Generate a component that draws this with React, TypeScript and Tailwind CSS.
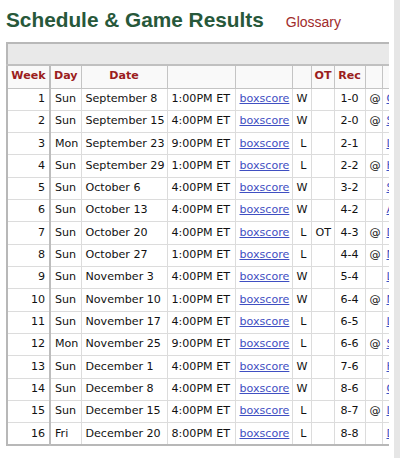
import React from "react";

interface Game {
  week: number;
  day: string;
  date: string;
  time: string;
  result: string;
  ot?: string;
  rec: string;
  away?: boolean;
  opp: string;
}

const games: Game[] = [
  { week: 1, day: "Sun", date: "September 8", time: "1:00PM ET", result: "W", rec: "1-0", away: true, opp: "Chicago Bears" },
  { week: 2, day: "Sun", date: "September 15", time: "4:00PM ET", result: "W", rec: "2-0", away: true, opp: "Seattle Seahawks" },
  { week: 3, day: "Mon", date: "September 23", time: "9:00PM ET", result: "L", rec: "2-1", opp: "Los Angeles Rams" },
  { week: 4, day: "Sun", date: "September 29", time: "1:00PM ET", result: "L", rec: "2-2", away: true, opp: "Houston Texans" },
  { week: 5, day: "Sun", date: "October 6", time: "4:00PM ET", result: "W", rec: "3-2", opp: "San Francisco 49ers" },
  { week: 6, day: "Sun", date: "October 13", time: "4:00PM ET", result: "W", rec: "4-2", opp: "Arizona Cardinals" },
  { week: 7, day: "Sun", date: "October 20", time: "4:00PM ET", result: "L", ot: "OT", rec: "4-3", away: true, opp: "Detroit Lions" },
  { week: 8, day: "Sun", date: "October 27", time: "1:00PM ET", result: "L", rec: "4-4", away: true, opp: "New York Giants" },
  { week: 9, day: "Sun", date: "November 3", time: "4:00PM ET", result: "W", rec: "5-4", opp: "Las Vegas Raiders" },
  { week: 10, day: "Sun", date: "November 10", time: "1:00PM ET", result: "W", rec: "6-4", away: true, opp: "New Orleans Saints" },
  { week: 11, day: "Sun", date: "November 17", time: "4:00PM ET", result: "L", rec: "6-5", opp: "Los Angeles Chargers" },
  { week: 12, day: "Mon", date: "November 25", time: "9:00PM ET", result: "L", rec: "6-6", away: true, opp: "Seattle Seahawks" },
  { week: 13, day: "Sun", date: "December 1", time: "4:00PM ET", result: "W", rec: "7-6", opp: "Houston Texans" },
  { week: 14, day: "Sun", date: "December 8", time: "4:00PM ET", result: "W", rec: "8-6", opp: "Chicago Bears" },
  { week: 15, day: "Sun", date: "December 15", time: "4:00PM ET", result: "L", rec: "8-7", away: true, opp: "Los Angeles Rams" },
  { week: 16, day: "Fri", date: "December 20", time: "8:00PM ET", result: "L", rec: "8-8", opp: "Denver Broncos" },
];

const td = "border border-[#dcdcdc] px-[4px] whitespace-nowrap overflow-hidden";
const th = "border border-[#c4c4c4] px-[3px] text-center font-bold text-[#9b1d20] whitespace-nowrap overflow-hidden";

export default function App() {
  return (
    <div className="w-[400px] h-[458px] flex overflow-hidden bg-white">
      <div className="flex-1 min-w-0 pl-[6px] pr-[5px]">
        <div className="flex items-baseline gap-[22px] pt-[7px] mb-[7px] leading-[26px] font-['Liberation_Sans',Arial,sans-serif]">
          <h1 className="text-[20.8px] font-bold text-[#27583a] whitespace-nowrap">Schedule &amp; Game Results</h1>
          <span className="text-[14px] text-[#a02b2b]">Glossary</span>
        </div>
        <div className="overflow-hidden">
          <table className="table-fixed border-collapse w-[500px] text-[11.1px] text-[#111] font-['DejaVu_Sans',Verdana,sans-serif] border-2 border-[#b8b8b8]">
            <colgroup>
              <col className="w-[43px]" />
              <col className="w-[31px]" />
              <col className="w-[86px]" />
              <col className="w-[68px]" />
              <col className="w-[57px]" />
              <col className="w-[19px]" />
              <col className="w-[23px]" />
              <col className="w-[31px]" />
              <col className="w-[17px]" />
              <col className="w-[125px]" />
            </colgroup>
            <thead>
              <tr className="h-[22px] bg-[#e9e9e9]">
                <th colSpan={10} className="border-b-2 border-[#c0c0c0]" />
              </tr>
              <tr className="h-[23px] bg-[#f9f9f9]">
                <th className={`${th} border-r-2 border-r-[#bdbdbd]`}>Week</th>
                <th className={th}>Day</th>
                <th className={th}>Date</th>
                <th className={th}></th>
                <th className={th}></th>
                <th className={th}></th>
                <th className={th}>OT</th>
                <th className={th}>Rec</th>
                <th className={th}></th>
                <th className={th}></th>
              </tr>
            </thead>
            <tbody>
              {games.map((g) => (
                <tr key={g.week} className="h-[22.33px]">
                  <td className={`${td} text-right border-r-2 border-r-[#bdbdbd]`}>{g.week}</td>
                  <td className={`${td} px-[3px]`}>{g.day}</td>
                  <td className={`${td} px-[3px]`}>{g.date}</td>
                  <td className={td}>{g.time}</td>
                  <td className={td}>
                    <a href="#" className="text-[#3f4fc2] underline">boxscore</a>
                  </td>
                  <td className={`${td} text-right px-[3px]`}>{g.result}</td>
                  <td className={`${td} px-[3px]`}>{g.ot ?? ""}</td>
                  <td className={`${td} text-center`}>{g.rec}</td>
                  <td className={`${td} text-center px-[1px]`}>{g.away ? "@" : ""}</td>
                  <td className={`${td} px-[3px]`}>
                    <a href="#" className="text-[#3f4fc2] underline">{g.opp}</a>
                  </td>
                </tr>
              ))}
            </tbody>
          </table>
        </div>
      </div>
      <div className="w-[6px] shrink-0 bg-[#e6e6e6]" />
    </div>
  );
}
